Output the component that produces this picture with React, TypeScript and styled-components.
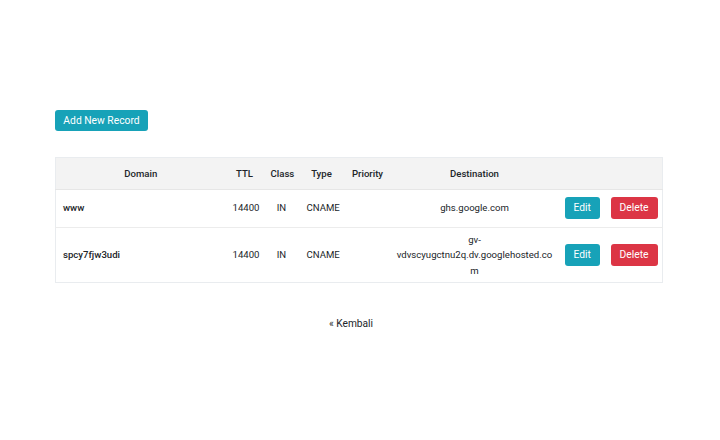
import React from "react";
import styled, { createGlobalStyle } from "styled-components";

const GlobalStyle = createGlobalStyle`
  body {
    margin: 0;
    background: #ffffff;
    font-family: Roboto, "Liberation Sans", Arial, sans-serif;
    color: #212529;
  }
`;

type DnsRecord = {
  domain: string;
  ttl: number;
  cls: string;
  type: string;
  priority: string;
  destination: string;
};

const records: DnsRecord[] = [
  { domain: "www", ttl: 14400, cls: "IN", type: "CNAME", priority: "", destination: "ghs.google.com" },
  {
    domain: "spcy7fjw3udi",
    ttl: 14400,
    cls: "IN",
    type: "CNAME",
    priority: "",
    destination: "gv-vdvscyugctnu2q.dv.googlehosted.com",
  },
];

const Page = styled.div`
  width: 607px;
  margin: 0 0 0 55px;
  padding-top: 109px;
`;

const Button = styled.button<{ $variant?: "info" | "danger" }>`
  display: inline-block;
  border: 0;
  border-radius: 3px;
  padding: 0 10px;
  height: 21px;
  font-family: inherit;
  font-size: 10.3px;
  line-height: 21px;
  color: #ffffff;
  cursor: pointer;
  background-color: ${({ $variant }) => ($variant === "danger" ? "#dc3545" : "#17a2b8")};
`;

const AddButton = styled(Button)`
  width: 93px;
  padding: 0;
`;

const RowButton = styled(Button)`
  height: 22px;
  line-height: 22px;
  margin: 3.5px 0;
  padding: 0 9px;
`;

const Table = styled.table`
  width: 607px;
  margin-top: 26px;
  table-layout: fixed;
  border-collapse: collapse;
  border: 1px solid #e9ecef;
  font-size: 9.6px;
  line-height: 15.5px;
`;

const HeadCell = styled.th`
  background: #f3f3f3;
  font-weight: 500;
  padding: 7.5px 7px;
  text-align: center;
  border-bottom: 1px solid #e6e6e6;
`;

const Cell = styled.td<{ $align?: "left" | "center" }>`
  padding: 4px 7px;
  text-align: ${({ $align }) => $align ?? "center"};
  vertical-align: middle;
  white-space: nowrap;
  border-top: 1px solid #ececec;
`;

const DomainCell = styled(Cell)`
  font-weight: 500;
`;

const DestinationCell = styled(Cell)`
  padding: 4px 3px;
  white-space: normal;
  overflow-wrap: anywhere;
`;

const ActionCell = styled(Cell)<{ $inset: number }>`
  text-align: left;
  padding: 4px 0 4px ${({ $inset }) => $inset}px;
`;

const Back = styled.div`
  margin-top: 35px;
  padding-right: 15px;
  text-align: center;
  font-size: 10.2px;
`;

const BackLink = styled.a`
  color: #212529;
  text-decoration: none;
`;

export default function App() {
  return (
    <>
      <GlobalStyle />
      <Page>
        <AddButton>Add New Record</AddButton>
        <Table>
          <colgroup>
            <col style={{ width: 170 }} />
            <col style={{ width: 38 }} />
            <col style={{ width: 36 }} />
            <col style={{ width: 44 }} />
            <col style={{ width: 48 }} />
            <col style={{ width: 166 }} />
            <col style={{ width: 46 }} />
            <col style={{ width: 59 }} />
          </colgroup>
          <thead>
            <tr>
              <HeadCell>Domain</HeadCell>
              <HeadCell>TTL</HeadCell>
              <HeadCell>Class</HeadCell>
              <HeadCell>Type</HeadCell>
              <HeadCell>Priority</HeadCell>
              <HeadCell>Destination</HeadCell>
              <HeadCell />
              <HeadCell />
            </tr>
          </thead>
          <tbody>
            {records.map((r) => (
              <tr key={r.domain}>
                <DomainCell $align="left">{r.domain}</DomainCell>
                <Cell>{r.ttl}</Cell>
                <Cell>{r.cls}</Cell>
                <Cell>{r.type}</Cell>
                <Cell>{r.priority}</Cell>
                <DestinationCell>{r.destination}</DestinationCell>
                <ActionCell $inset={7}>
                  <RowButton>Edit</RowButton>
                </ActionCell>
                <ActionCell $inset={7}>
                  <RowButton $variant="danger">Delete</RowButton>
                </ActionCell>
              </tr>
            ))}
          </tbody>
        </Table>
        <Back>
          <BackLink href="#">« Kembali</BackLink>
        </Back>
      </Page>
    </>
  );
}
